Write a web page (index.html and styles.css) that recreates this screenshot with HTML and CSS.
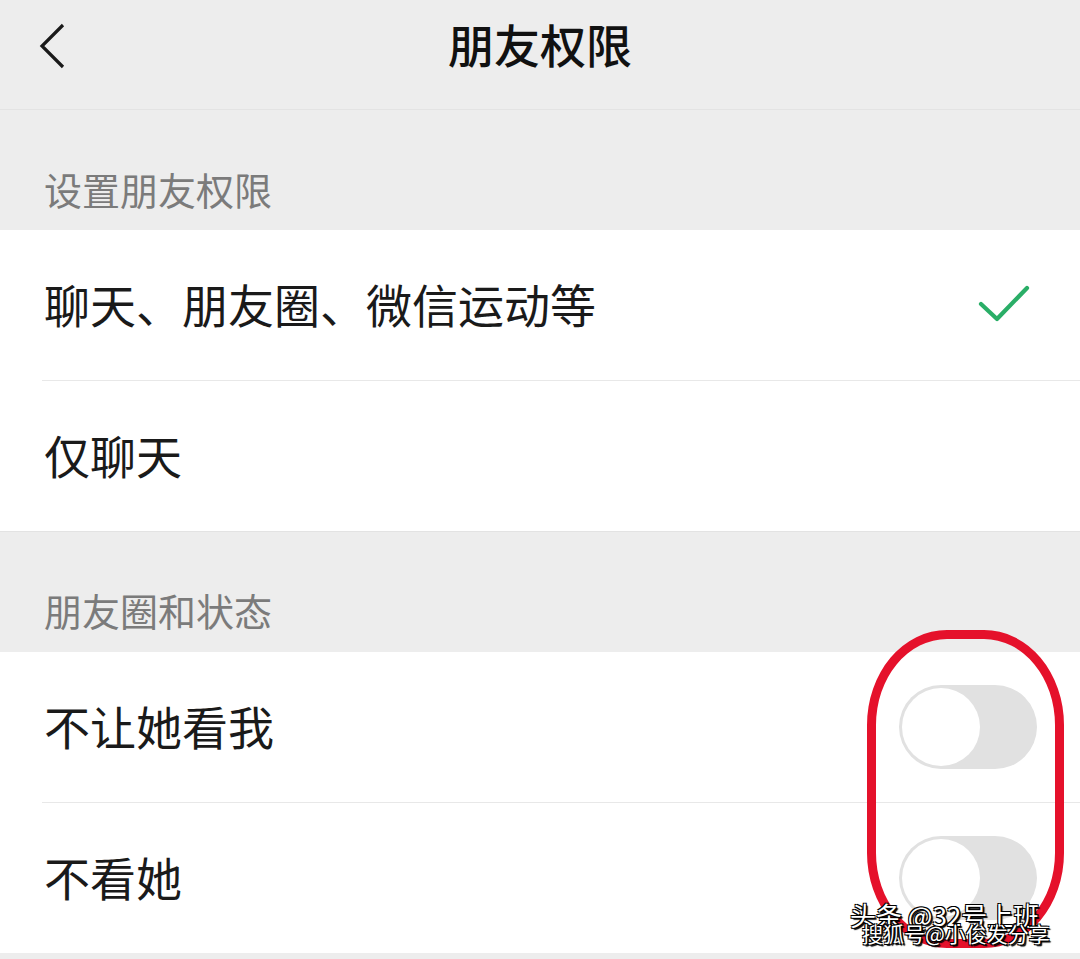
FILE: index.html
```html
<!DOCTYPE html>
<html lang="zh-CN">
<head>
  <meta charset="UTF-8" />
  <meta name="viewport" content="width=device-width, initial-scale=1.0"/>
  <title>朋友权限</title>
  <link rel="stylesheet" href="styles.css">
</head>
<body>
  <div class="page">
    <div class="nav">
      <div class="nav-back">
        <svg width="30" height="48" viewBox="0 0 30 48">
          <path d="M25 3 L4 24 L25 45" fill="none" stroke="#1a1a1a" stroke-width="3.2" stroke-linejoin="miter"/>
        </svg>
      </div>
      <div class="nav-title">朋友权限</div>
      <div></div>
    </div>

    <div class="group-title">设置朋友权限</div>
    <div class="list">
      <div class="cell">
        <span class="cell-text">聊天、朋友圈、微信运动等</span>
        <svg class="check" width="52" height="38" viewBox="0 0 52 38">
          <path d="M3 19 L19 34 L49 3" fill="none" stroke="#2aae67" stroke-width="4.2" stroke-linecap="round" stroke-linejoin="round"/>
        </svg>
      </div>
      <div class="cell">
        <span class="cell-text">仅聊天</span>
      </div>
    </div>

    <div class="group-title second">朋友圈和状态</div>
    <div class="list">
      <div class="cell">
        <span class="cell-text">不让她看我</span>
        <div class="switch"><div class="knob"></div></div>
      </div>
      <div class="cell">
        <span class="cell-text">不看她</span>
        <div class="switch"><div class="knob"></div></div>
      </div>
    </div>
    <div class="bottom"></div>

    <div class="mark"></div>
    <div class="watermark">
      <div class="wm-top">头条 @32号上班</div>
      <div class="wm-bottom">搜狐号@小俊发分享</div>
    </div>
  </div>
</body>
</html>
```

FILE: styles.css
```css
body {
  margin: 0;
  background: #ededed;
  font-family: "Noto Sans CJK SC", "Noto Sans", sans-serif;
  color: #1a1a1a;
  overflow: hidden;
}
.page {
  position: relative;
  width: 1080px;
  height: 959px;
}
.nav {
  height: 109px;
  border-bottom: 1px solid #e3e3e3;
  display: grid;
  grid-template-columns: 1fr auto 1fr;
  align-items: center;
  box-sizing: content-box;
}
.nav-back {
  padding-left: 38px;
  display: flex;
  padding-bottom: 18px;
}
.nav-title {
  font-size: 46px;
  font-weight: 500;
  line-height: 1;
  color: #111;
  padding-bottom: 24px;
}
.group-title {
  height: 120px;
  box-sizing: border-box;
  display: flex;
  align-items: flex-end;
  padding: 0 0 22px 44px;
  font-size: 38px;
  line-height: 1;
  color: #7b7b7b;
}
.group-title.second {
  height: 121px;
  border-top: 1px solid #e3e3e3;
  padding-bottom: 23px;
}
.list {
  background: #fff;
}
.cell {
  height: 150px;
  margin-left: 42px;
  padding-left: 2px;
  display: flex;
  align-items: center;
  justify-content: space-between;
  border-bottom: 1px solid #e8e8e8;
}
.cell:last-child {
  border-bottom: none;
}
.cell-text {
  font-size: 46px;
  line-height: 1;
  padding-bottom: 5px;
}
.check {
  margin-right: 50px;
  margin-top: -2px;
}
.switch {
  width: 138px;
  height: 84px;
  border-radius: 42px;
  background: #e1e1e1;
  box-sizing: border-box;
  padding: 3px;
  margin-right: 43px;
}
.knob {
  width: 78px;
  height: 78px;
  border-radius: 50%;
  background: #fff;
}
.bottom {
  height: 6px;
  background: #ededed;
}
.mark {
  position: absolute;
  left: 867px;
  top: 630px;
  width: 197px;
  height: 318px;
  box-sizing: border-box;
  border: 9px solid #e5112b;
  border-radius: 80px / 95px;
}
.watermark {
  position: absolute;
  left: 850px;
  top: 902px;
  color: #fff;
  line-height: 1;
  text-shadow: 1px 1px 0 #000, -1px -1px 0 #000, 1px -1px 0 #000, -1px 1px 0 #000, 2px 2px 1px #000;
}
.wm-top {
  font-size: 26px;
}
.wm-bottom {
  font-size: 21px;
  margin-top: -5px;
  margin-left: 12px;
}
```
